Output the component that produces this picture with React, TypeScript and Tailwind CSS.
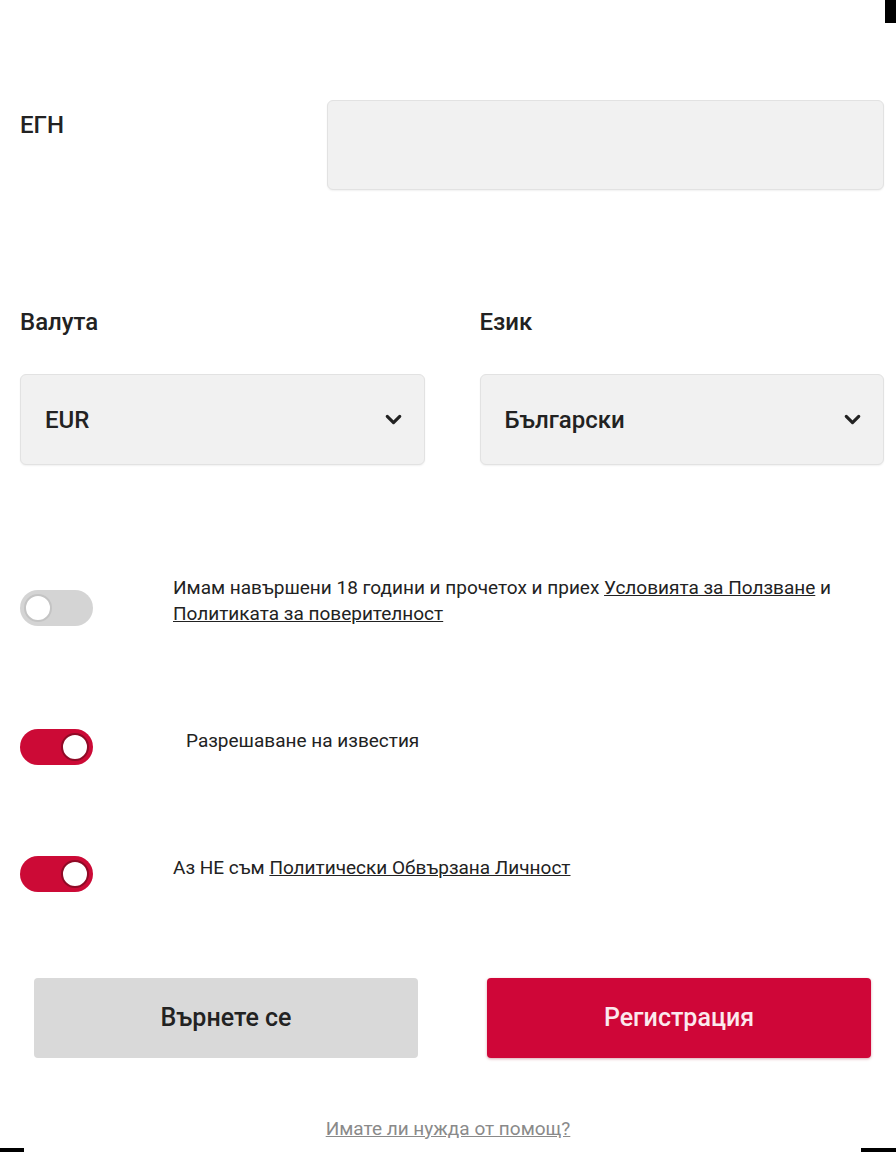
import { ChevronDown } from 'lucide-react';

function Toggle({ on }: { on: boolean }) {
  return (
    <div
      className={
        on
          ? 'flex h-[36px] w-[73px] shrink-0 items-center justify-end rounded-full bg-[#cc0a36] px-[4px]'
          : 'flex h-[36px] w-[73px] shrink-0 items-center justify-start rounded-full bg-[#d4d4d4] px-[4px]'
      }
    >
      <div
        className={
          on
            ? 'h-[28px] w-[28px] rounded-full border-2 border-[#8f0a26] bg-white'
            : 'h-[28px] w-[28px] rounded-full border-2 border-[#c4c4c4] bg-white'
        }
      />
    </div>
  );
}

function Select({ value }: { value: string }) {
  return (
    <div className="flex h-[91px] items-center justify-between rounded-md border border-[#e2e2e2] bg-[#f1f1f1] pl-6 pr-[18px] shadow-[0_1px_2px_rgba(0,0,0,0.06)]">
      <span className="text-[24px] font-medium text-[#222]">{value}</span>
      <ChevronDown size={25} strokeWidth={3} className="text-[#222]" />
    </div>
  );
}

export default function App() {
  return (
    <div className="relative h-[1152px] w-[896px] overflow-hidden bg-white font-['Roboto','Noto_Sans',sans-serif] text-[#222]">
      {/* frame artifacts */}
      <div className="absolute right-0 top-0 h-[23px] w-[11px] bg-black" />
      <div className="absolute bottom-0 left-0 h-[4px] w-[24px] bg-black" />
      <div className="absolute bottom-0 right-0 h-[4px] w-[35px] bg-black" />

      <div className="pl-5 pr-3 pt-[100px]">
        <div className="flex items-start">
          <div className="w-[307px] pt-[9px] text-[24px] font-medium leading-[32px]">ЕГН</div>
          <div className="h-[90px] flex-1 rounded-md border border-[#e2e2e2] bg-[#f1f1f1] shadow-[0_1px_2px_rgba(0,0,0,0.06)]" />
        </div>

        <div className="mt-[116px] grid grid-cols-2 gap-[55px]">
          <div>
            <div className="text-[24px] font-medium leading-[32px]">Валута</div>
            <div className="mt-[36px]">
              <Select value="EUR" />
            </div>
          </div>
          <div>
            <div className="text-[24px] font-medium leading-[32px]">Език</div>
            <div className="mt-[36px]">
              <Select value="Български" />
            </div>
          </div>
        </div>

        <div className="mt-[110px] flex items-start">
          <div className="mt-[15px]">
            <Toggle on={false} />
          </div>
          <p className="ml-[80px] text-[19px] leading-[26px]">
            Имам навършени 18 години и прочетох и приех{' '}
            <span className="underline">Условията за Ползване</span> и
            <br />
            <span className="underline">Политиката за поверителност</span>
          </p>
        </div>

        <div className="mt-[101px] flex items-center">
          <Toggle on={true} />
          <p className="mb-[12px] ml-[93px] text-[19px] leading-[26px]">Разрешаване на известия</p>
        </div>

        <div className="mt-[89px] flex items-center">
          <Toggle on={true} />
          <p className="mb-[12px] ml-[80px] text-[19px] leading-[26px]">
            Аз НЕ съм <span className="underline">Политически Обвързана Личност</span>
          </p>
        </div>
      </div>

      <div className="mt-[85px] grid grid-cols-2 gap-[69px] pl-[34px] pr-[25px]">
        <button className="flex h-[80px] items-center justify-center rounded bg-[#d9d9d9] text-[25px] font-medium text-[#222]">
          Върнете се
        </button>
        <button className="flex h-[80px] items-center justify-center rounded bg-[#cf0638] text-[25px] font-medium text-[#fbe9ee] shadow-[0_1px_3px_rgba(150,0,30,0.35)]">
          Регистрация
        </button>
      </div>

      <div className="mt-[58px] text-center text-[19px] leading-[26px] text-[#8a8a8a]">
        <span className="underline">Имате ли нужда от помощ?</span>
      </div>
    </div>
  );
}
